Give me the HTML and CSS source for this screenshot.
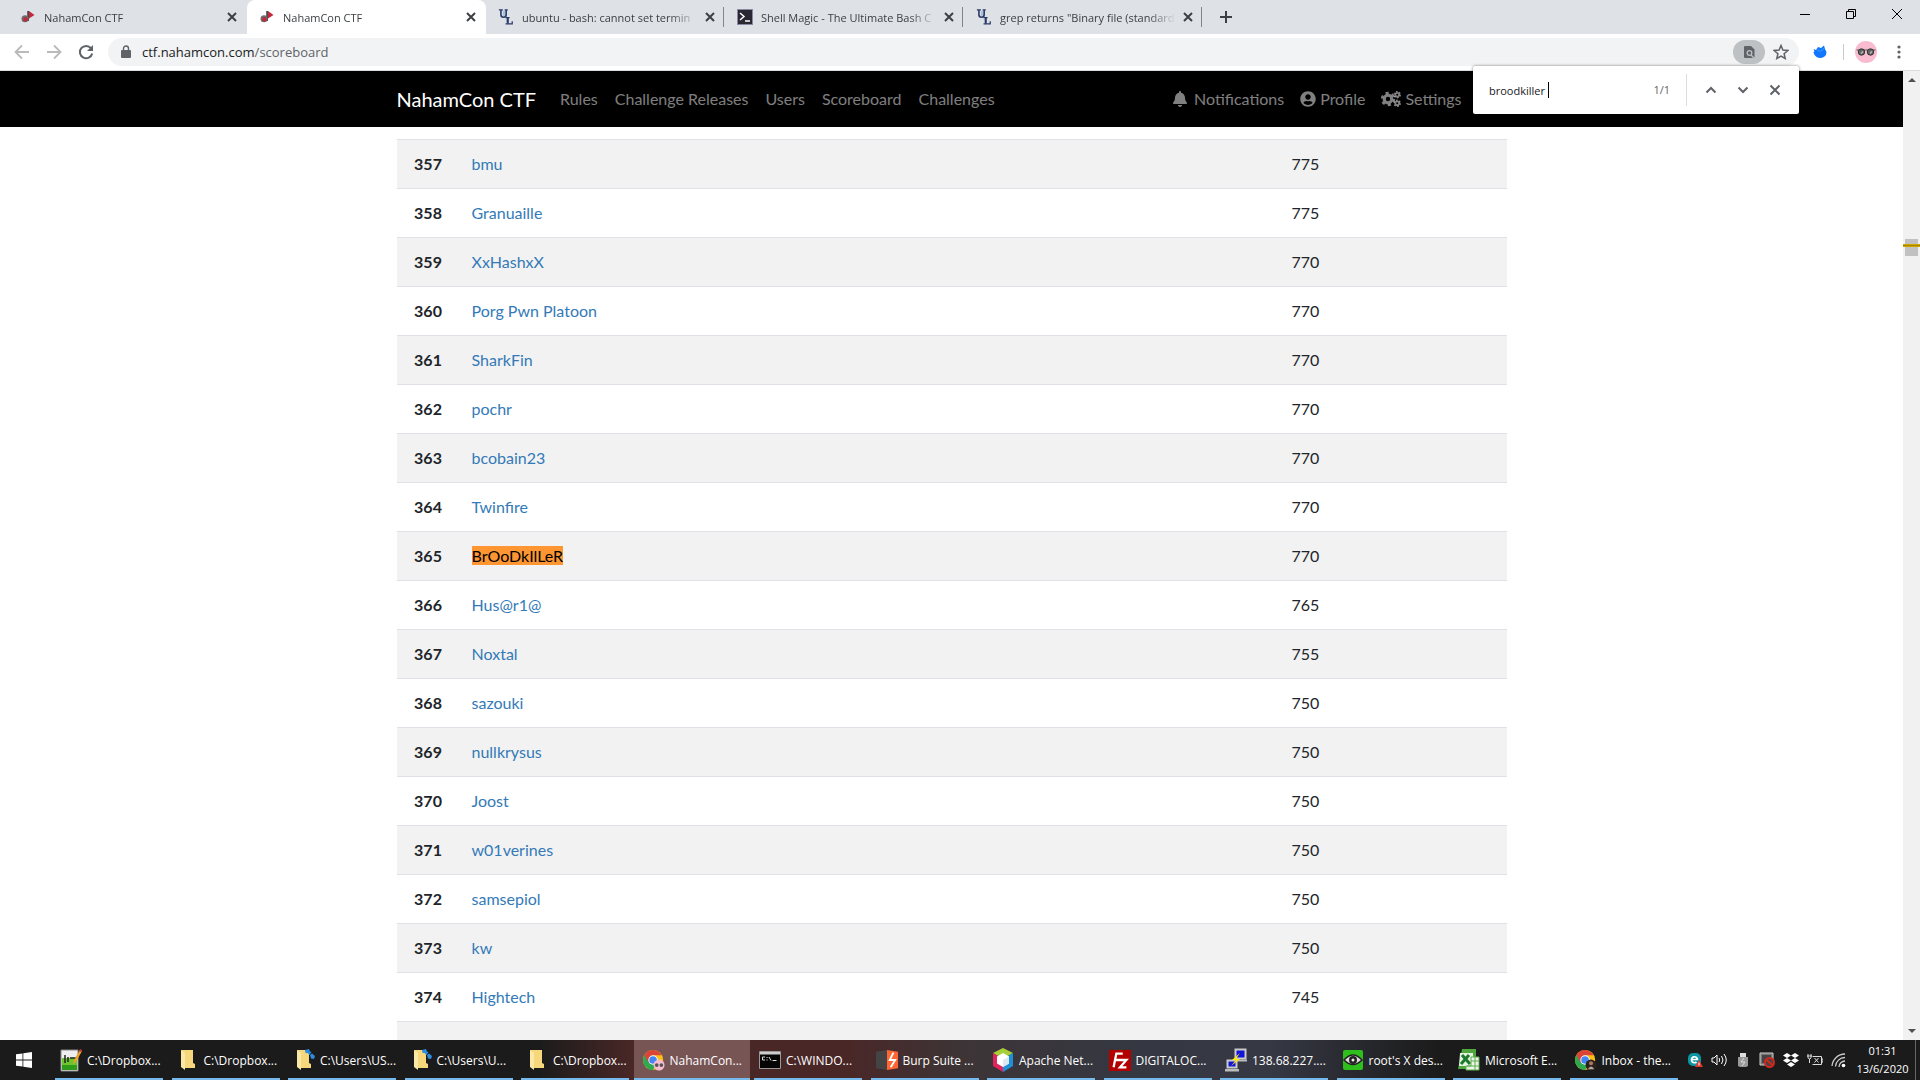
FILE: index.html
```html
<!DOCTYPE html>
<html lang="en">
<head>
<meta charset="utf-8">
<title>NahamCon CTF</title>
<link rel="stylesheet" href="styles.css">
</head>
<body>
<svg class="defs" aria-hidden="true">
  <defs>
    <symbol id="i-close" viewBox="0 0 16 16"><path d="M4 4l8 8M12 4l-8 8" fill="none" stroke="currentColor" stroke-width="2"/></symbol>
    <symbol id="i-flag" viewBox="0 0 16 16"><path d="M9 2l5.500 4-5.500 3.500z" fill="#c3283a"/><path d="M7.200 2h1.800v10H7.200z" fill="#4a4a4e"/><circle cx="5" cy="9.800" r="3.500" fill="#6c6c70"/><circle cx="5.500" cy="10.300" r="2.200" fill="#c3283a"/></symbol>
    <symbol id="i-ul" viewBox="0 0 16 18"><path d="M6 2v6M9 11l1 4" fill="none" stroke="#a9c3df" stroke-width="3"/><path d="M0 1h4.500M6.500 1H10M0 1" fill="none" stroke="#2a3a66" stroke-width="1.400"/><path d="M2.300 1v5.500q0 2.800 2.900 2.800Q8.200 9.300 8.200 6.500V1" fill="none" stroke="#2a3a66" stroke-width="1.800"/><path d="M7.500 9.800h4.500M7.500 16.800h7.500v-3" fill="none" stroke="#2a3a66" stroke-width="1.400"/><path d="M10 9.500v7" stroke="#2a3a66" stroke-width="2.200"/></symbol>
    <symbol id="i-shell" viewBox="0 0 16 16"><path d="M0 0h16v16H0z" fill="#8a88a4"/><path d="M1 1h14v14H1z" fill="#2a2933"/><path d="M3 4l4 3.500L3 11M8 12h5" fill="none" stroke="#fff" stroke-width="1.500"/></symbol>
    <symbol id="i-folder" viewBox="0 0 22 22"><path d="M6 1h9v14h2v4H6z" fill="#e9bd55"/><path d="M4 1h12v13l2 1v4H8z" fill="#f6d77b"/><path d="M4 1l4 3v17l-4-3z" fill="#fbe7a6"/></symbol>
    <symbol id="i-chrome" viewBox="0 0 24 24"><circle cx="11" cy="12" r="11" fill="#fbc116"/><path d="M11 12L1.500 6.500A11 11 0 0 0 11 23l5-8z" fill="#2da94f"/><path d="M1.500 6.500A11 11 0 0 1 20.500 6.800H11L6 15z" fill="#db4437"/><circle cx="11" cy="12" r="5.200" fill="#fff"/><circle cx="11" cy="12" r="4.200" fill="#4285f4"/></symbol>
  </defs>
</svg>

<header class="browser">
  <div class="tabstrip">
    <div class="tabs">
      <div class="tab"><svg class="favicon"><use href="#i-flag"/></svg><span class="tab-title">NahamCon CTF</span><button class="tab-close" aria-label="Close tab"><svg><use href="#i-close"/></svg></button></div>
      <div class="tab tab-active"><svg class="favicon"><use href="#i-flag"/></svg><span class="tab-title">NahamCon CTF</span><button class="tab-close" aria-label="Close tab"><svg><use href="#i-close"/></svg></button></div>
      <div class="tab tab-line"><svg class="favicon"><use href="#i-ul"/></svg><span class="tab-title">ubuntu - bash: cannot set termin</span><button class="tab-close" aria-label="Close tab"><svg><use href="#i-close"/></svg></button></div>
      <div class="tab tab-line"><svg class="favicon"><use href="#i-shell"/></svg><span class="tab-title">Shell Magic - The Ultimate Bash C</span><button class="tab-close" aria-label="Close tab"><svg><use href="#i-close"/></svg></button></div>
      <div class="tab tab-line"><svg class="favicon"><use href="#i-ul"/></svg><span class="tab-title">grep returns "Binary file (standard</span><button class="tab-close" aria-label="Close tab"><svg><use href="#i-close"/></svg></button></div>
      <button class="new-tab" aria-label="New tab"><svg viewBox="0 0 14 14"><path d="M7 1v12M1 7h12" stroke="currentColor" stroke-width="2"/></svg></button>
    </div>
    <div class="window-buttons">
      <button aria-label="Minimize"><svg viewBox="0 0 12 12"><path d="M1 6.500h10" stroke="#000"/></svg></button>
      <button aria-label="Restore"><svg viewBox="0 0 12 12"><path d="M1.500 3.500h7v7h-7zM3.500 3.500v-2h7v7h-2" fill="none" stroke="#000"/></svg></button>
      <button aria-label="Close"><svg viewBox="0 0 12 12"><path d="M1 1l10 10M11 1L1 11" stroke="#000"/></svg></button>
    </div>
  </div>
  <div class="toolbar">
    <div class="nav-buttons">
      <button class="dim" aria-label="Back"><svg viewBox="0 0 16 16"><path d="M15 8H2M8 1.500L1.500 8 8 14.500" fill="none" stroke="currentColor" stroke-width="1.800"/></svg></button>
      <button class="dim" aria-label="Forward"><svg viewBox="0 0 16 16"><path d="M1 8h13M8 1.500L14.500 8 8 14.500" fill="none" stroke="currentColor" stroke-width="1.800"/></svg></button>
      <button aria-label="Reload"><svg viewBox="0 0 16 16"><path d="M13 4.200A6.200 6.200 0 1 0 14.200 9.500" fill="none" stroke="currentColor" stroke-width="2"/><path d="M15 1v6H9z" fill="currentColor"/></svg></button>
    </div>
    <div class="omnibox">
      <svg class="lock" viewBox="0 0 10 14"><path d="M1 5h8a1 1 0 0 1 1 1v6a1 1 0 0 1-1 1H1a1 1 0 0 1-1-1V6a1 1 0 0 1 1-1z" fill="#5f6368"/><path d="M2.500 6V3.500a2.500 2.500 0 0 1 5 0V6" fill="none" stroke="#5f6368" stroke-width="1.400"/></svg>
      <span class="url">ctf.nahamcon.com<span class="path">/scoreboard</span></span>
      <button class="find-chip" aria-label="Find in page"><svg viewBox="0 0 16 16"><path d="M4 2h6l3.500 3.500V13a1 1 0 0 1-1 1H4a1 1 0 0 1-1-1V3a1 1 0 0 1 1-1z" fill="#5f6368"/><circle cx="8.500" cy="9" r="2.300" fill="none" stroke="#bdc1c3" stroke-width="1.300"/><path d="M10 11l3 3" stroke="#bdc1c3" stroke-width="1.300"/></svg></button>
      <button class="star" aria-label="Bookmark"><svg viewBox="0 0 16 16"><path d="M8 1.500l1.900 4.600 4.900.4-3.700 3.200 1.100 4.800L8 12l-4.200 2.500 1.100-4.800L1.200 6.500l4.900-.4z" fill="none" stroke="#5f6368" stroke-width="1.500"/></svg></button>
    </div>
    <button class="extension" aria-label="Extension"><svg viewBox="0 0 16 16"><path d="M1.500 5l2.500 1 2-3 3 1 3-2.500 1 3.500 1.500 3q0 3-2 4.500-2.500 1.700-5 1.500-3-.2-4.500-2.500L2 10l-.5-2 1-.5z" fill="#1177ff"/><path d="M5 6q4 3 7-2" fill="none" stroke="#3f9bff"/></svg></button>
    <span class="toolbar-line"></span>
    <button class="avatar" aria-label="Profile"><svg viewBox="0 0 22 22"><circle cx="11" cy="11" r="11" fill="#f8bbd0"/><path d="M1.500 9h19" stroke="#555" stroke-width="1"/><circle cx="6.500" cy="11" r="3.200" fill="#666" stroke="#333"/><circle cx="15.500" cy="11" r="3.200" fill="#666" stroke="#333"/><path d="M6 12.500l2-2M15 12.500l2-2" stroke="#bbb" stroke-width="1.300"/></svg></button>
    <button class="menu" aria-label="Menu"><svg viewBox="0 0 4 16"><circle cx="2" cy="3" r="1.600"/><circle cx="2" cy="8" r="1.600"/><circle cx="2" cy="13" r="1.600"/></svg></button>
    <form class="findbar">
      <input type="text" class="find-input" aria-label="Find" value="broodkiller"><span class="caret"></span>
      <span class="find-count">1/1</span>
      <button type="button" aria-label="Previous"><svg viewBox="0 0 16 16"><path d="M3.500 10.500L8 6l4.500 4.500" fill="none" stroke="currentColor" stroke-width="2"/></svg></button>
      <button type="button" aria-label="Next"><svg viewBox="0 0 16 16"><path d="M3.500 5.500L8 10l4.500-4.500" fill="none" stroke="currentColor" stroke-width="2"/></svg></button>
      <button type="button" aria-label="Close find bar"><svg viewBox="0 0 16 16"><path d="M3.500 3.500l9 9M12.500 3.500l-9 9" fill="none" stroke="currentColor" stroke-width="2"/></svg></button>
    </form>
  </div>
</header>

<div class="viewport">
  <div class="page">
    <nav class="navbar">
      <div class="container nav-row">
        <a class="brand" href="#">NahamCon CTF</a>
        <a class="nav-link" href="#">Rules</a>
        <a class="nav-link" href="#">Challenge Releases</a>
        <a class="nav-link" href="#">Users</a>
        <a class="nav-link" href="#">Scoreboard</a>
        <a class="nav-link" href="#">Challenges</a>
        <div class="nav-right">
          <a class="nav-link" href="#"><svg class="fa fa-bell" viewBox="0 0 448 512"><path d="M224 512c35.320 0 63.970-28.650 63.970-64H160.030c0 35.350 28.650 64 63.970 64zm215.390-149.710c-19.320-20.760-55.470-51.990-55.470-154.290 0-77.700-54.480-139.900-127.940-155.160V32c0-17.670-14.320-32-31.980-32s-31.980 14.330-31.980 32v20.840C118.560 68.100 64.080 130.300 64.080 208c0 102.300-36.150 133.530-55.470 154.290-6 6.450-8.660 14.160-8.610 21.710.11 16.400 12.980 32 32.100 32h383.800c19.120 0 32-15.600 32.100-32 .05-7.550-2.610-15.270-8.610-21.710z"/></svg>Notifications</a>
          <a class="nav-link" href="#"><svg class="fa fa-user" viewBox="0 0 496 512"><path d="M248 8C111 8 0 119 0 256s111 248 248 248 248-111 248-248S385 8 248 8zm0 96c48.600 0 88 39.400 88 88s-39.400 88-88 88-88-39.400-88-88 39.400-88 88-88zm0 344c-58.700 0-111.300-26.600-146.500-68.200 18.800-35.400 55.600-59.800 98.500-59.800 2.400 0 4.800.4 7.100 1.100 13 4.200 26.600 6.900 40.900 6.900s28-2.700 40.900-6.900c2.300-.7 4.700-1.100 7.100-1.100 42.900 0 79.700 24.400 98.500 59.800C359.300 421.400 306.700 448 248 448z"/></svg>Profile</a>
          <a class="nav-link" href="#"><svg class="fa fa-cogs" viewBox="0 0 20 16"><circle cx="7" cy="8" r="3.800" fill="none" stroke="currentColor" stroke-width="3.200"/><circle cx="7" cy="8" r="6.200" fill="none" stroke="currentColor" stroke-width="2" stroke-dasharray="3.200 3.290"/><circle cx="16.200" cy="3.700" r="1.900" fill="none" stroke="currentColor" stroke-width="1.800"/><circle cx="16.200" cy="3.700" r="3.200" fill="none" stroke="currentColor" stroke-width="1.200" stroke-dasharray="1.700 1.650"/><circle cx="16.200" cy="12.300" r="1.900" fill="none" stroke="currentColor" stroke-width="1.800"/><circle cx="16.200" cy="12.300" r="3.200" fill="none" stroke="currentColor" stroke-width="1.200" stroke-dasharray="1.700 1.650"/></svg>Settings</a>
        </div>
      </div>
    </nav>
    <main class="container scoreboard">
      <table class="table">
        <colgroup><col class="col-place"><col><col class="col-score"></colgroup>
        <tbody>
          <tr><th scope="row">357</th><td><a href="#">bmu</a></td><td>775</td></tr>
          <tr><th scope="row">358</th><td><a href="#">Granuaille</a></td><td>775</td></tr>
          <tr><th scope="row">359</th><td><a href="#">XxHashxX</a></td><td>770</td></tr>
          <tr><th scope="row">360</th><td><a href="#">Porg Pwn Platoon</a></td><td>770</td></tr>
          <tr><th scope="row">361</th><td><a href="#">SharkFin</a></td><td>770</td></tr>
          <tr><th scope="row">362</th><td><a href="#">pochr</a></td><td>770</td></tr>
          <tr><th scope="row">363</th><td><a href="#">bcobain23</a></td><td>770</td></tr>
          <tr><th scope="row">364</th><td><a href="#">Twinfire</a></td><td>770</td></tr>
          <tr><th scope="row">365</th><td><a href="#"><mark>BrOoDkIlLeR</mark></a></td><td>770</td></tr>
          <tr><th scope="row">366</th><td><a href="#">Hus@r1@</a></td><td>765</td></tr>
          <tr><th scope="row">367</th><td><a href="#">Noxtal</a></td><td>755</td></tr>
          <tr><th scope="row">368</th><td><a href="#">sazouki</a></td><td>750</td></tr>
          <tr><th scope="row">369</th><td><a href="#">nullkrysus</a></td><td>750</td></tr>
          <tr><th scope="row">370</th><td><a href="#">Joost</a></td><td>750</td></tr>
          <tr><th scope="row">371</th><td><a href="#">w01verines</a></td><td>750</td></tr>
          <tr><th scope="row">372</th><td><a href="#">samsepiol</a></td><td>750</td></tr>
          <tr><th scope="row">373</th><td><a href="#">kw</a></td><td>750</td></tr>
          <tr><th scope="row">374</th><td><a href="#">Hightech</a></td><td>745</td></tr>
          <tr><th scope="row"></th><td></td><td></td></tr>
        </tbody>
      </table>
    </main>
  </div>
  <div class="scrollbar">
    <svg viewBox="0 0 8 4"><path d="M0 4l4-4 4 4z"/></svg>
    <div class="thumb"></div>
    <svg viewBox="0 0 8 4"><path d="M0 0l4 4 4-4z"/></svg>
  </div>
</div>

<footer class="taskbar">
  <button class="start" aria-label="Start"><svg viewBox="0 0 16 16"><path d="M0 2.300L6.500 1.400v6.200H0zM7.300 1.300L16 0v7.600H7.300zM0 8.400h6.500v6.200L0 13.700zM7.300 8.400H16V16l-8.700-1.300z" fill="#fff"/></svg></button>
  <div class="tasks">
    <button class="task"><svg viewBox="0 0 22 24"><path d="M1 2h17v21H1z" fill="#eee" stroke="#888"/><path d="M2 10h15v12H2z" fill="#6cc52c"/><path d="M2 17h15v5H2z" fill="#2e9b1a"/><path d="M5 7v8M8 9v5M10 10h6" stroke="#222" stroke-width="1.500"/><path d="M13 16l1-4 6-10 2 1-6 11z" fill="#e7a12a"/><path d="M19 3l1-2 2 1-1 2z" fill="#c33"/></svg><span>C:\Dropbox...</span></button>
    <button class="task"><svg viewBox="0 0 22 22"><use href="#i-folder"/></svg><span>C:\Dropbox...</span></button>
    <button class="task"><svg viewBox="0 0 22 22"><use href="#i-folder"/><path d="M12 1l4-1 1 2.500 1.500.5-2 3-2-2-2 0zM17 6l2-1.500 3 2.500-1 3-3-.5z" fill="#2d8ce0"/></svg><span>C:\Users\US...</span></button>
    <button class="task"><svg viewBox="0 0 22 22"><use href="#i-folder"/><path d="M12 1l4-1 1 2.500 1.500.5-2 3-2-2-2 0zM17 6l2-1.500 3 2.500-1 3-3-.5z" fill="#2d8ce0"/></svg><span>C:\Users\U...</span></button>
    <button class="task"><svg viewBox="0 0 22 22"><use href="#i-folder"/></svg><span>C:\Dropbox...</span></button>
    <button class="task task-active"><svg viewBox="0 0 24 24"><use href="#i-chrome"/><circle cx="17.500" cy="17.500" r="6" fill="#f8bbd0"/><circle cx="15" cy="17.500" r="2" fill="#555"/><circle cx="20" cy="17.500" r="2" fill="#555"/></svg><span>NahamCon...</span></button>
    <button class="task"><svg viewBox="0 0 22 22"><path d="M.5 2.500h21v17H.5z" fill="#050505" stroke="#999"/><path d="M1 3h20v2.500H1z" fill="#ccc"/><path d="M6 8H3.500v3H6M8 8v1M8 10.500v1M10 8l2 3.500M13.500 11.500h4" fill="none" stroke="#ddd"/></svg><span>C:\WINDO...</span></button>
    <button class="task"><svg viewBox="0 0 24 24"><path d="M0 3l12-2v22L0 21z" fill="#444"/><path d="M12 1l12 2v18l-12 2z" fill="#ff6633"/><path d="M19 4l-4 8h6l-5 8" fill="none" stroke="#fff" stroke-width="2"/></svg><span>Burp Suite ...</span></button>
    <button class="task"><svg viewBox="0 0 22 24"><path d="M11 0l10 5-10 6L1 5z" fill="#a8cf38"/><path d="M1 5l10 6v13L1 18z" fill="#e0245e"/><path d="M21 5l-10 6v13l10-6z" fill="#1f8fd6"/><path d="M11 5l6 3.500v7L11 19l-6-3.500v-7z" fill="#fff"/><path d="M11 12l6-3.500v7L11 19z" fill="#dbe9ef"/></svg><span>Apache Net...</span></button>
    <button class="task"><svg viewBox="0 0 24 24"><path d="M0 1h24v23H0z" fill="#b30000"/><path d="M5 20L8 5h7M6.500 12h6M12 12h7l-7 8h7" fill="none" stroke="#fff" stroke-width="2.500"/></svg><span>DIGITALOC...</span></button>
    <button class="task"><svg viewBox="0 0 22 24"><path d="M10.500 1.500h10v9h-10zM2.500 12.500h9v7h-9z" fill="#1414d8" stroke="#ccc" stroke-width="2"/><path d="M9 11.500h13v2H11zM0 21h14v2.500H0z" fill="#bbb"/><path d="M15 5l-8 7 4 0-5 6 9-7-4 0z" fill="#ffec00"/></svg><span>138.68.227....</span></button>
    <button class="task"><svg viewBox="0 0 22 22"><rect x="1" y="1" width="20" height="20" rx="2" fill="#2fbf1d"/><path d="M2 11q9-10 18 0-9 9-18 0z" fill="#ddd" stroke="#222" stroke-width="1.500"/><circle cx="11" cy="11" r="4" fill="#222"/><circle cx="11" cy="11" r="1.500" fill="#eee"/></svg><span>root's X des...</span></button>
    <button class="task"><svg viewBox="0 0 22 22"><path d="M4 0h14v20H0z" fill="#4fa83d"/><path d="M2 4h13v13H1z" fill="#e4f2df"/><path d="M4 6l8 9M11 6l-8 9" stroke="#1d7a2d" stroke-width="3"/><path d="M13 8h8v13H8v-4h5z" fill="#e9f5e5" stroke="#5fae4e"/><path d="M13 12h8M9 17h12M17 8v13" stroke="#5fae4e"/></svg><span>Microsoft E...</span></button>
    <button class="task"><svg viewBox="0 0 24 24"><use href="#i-chrome"/><circle cx="17.500" cy="17.500" r="6" fill="#2b211d"/><circle cx="17.500" cy="15.500" r="2.200" fill="#a9795c"/><path d="M14 22q3.500-6 7 0z" fill="#b9a9a0"/></svg><span>Inbox - the...</span></button>
  </div>
  <div class="tray">
    <svg viewBox="0 0 16 16"><rect x="1" y="1" width="13" height="13" rx="5" fill="#0a96a4"/><path d="M4.500 7.500h6a3 3 0 1 0-1 2.500" fill="none" stroke="#fff" stroke-width="1.700"/><path d="M12 8l4 7H8z" fill="#e03a2f"/><path d="M12 10.500v3" stroke="#fff"/></svg>
    <svg viewBox="0 0 16 16"><path d="M1 6h2l3-3v10l-3-3H1zM8 6q1.500 2 0 4M10.500 4q3 4 0 8M13 2q4.500 6 0 12" fill="none" stroke="#fff"/></svg>
    <svg viewBox="0 0 16 16"><path d="M5 1h6v4H5z" fill="#ddd"/><path d="M3 5h10v9l-2 1H5l-2-1z" fill="#999"/><path d="M9 6l-3 4h4l-3 4" fill="none" stroke="#ddd"/></svg>
    <svg viewBox="0 0 16 16"><path d="M1 1h13v12H1z" fill="#777" stroke="#ccc"/><path d="M3 3h9v8H3z" fill="#444"/><circle cx="10.500" cy="10.500" r="4.500" fill="#444" stroke="#d3261d" stroke-width="2"/><path d="M7.500 8l6 5" stroke="#d3261d" stroke-width="2"/></svg>
    <svg viewBox="0 0 16 16"><path d="M4 1l4 2.500L4 6 0 3.500zM12 1l4 2.500L12 6 8 3.500zM4 6l4 2.500L4 11 0 8.500zM12 6l4 2.500-4 2.500-4-2.500zM8 10l4 2.500L8 15l-4-2.500z" fill="#fff"/></svg>
    <svg viewBox="0 0 16 16"><path d="M5.500 4.500h9v8h-9M14.500 7H16v3h-1.500M0 4h5M1 2v4q2 2 3 0V2M2.500 7v4M7.500 6l4 4.500M11.500 6l-4 4.500" fill="none" stroke="#ddd"/></svg>
    <svg viewBox="0 0 16 16"><path d="M1 14A13 13 0 0 1 14 2M4.500 14.500A9.500 9.500 0 0 1 14 5.500M8 15a6 6 0 0 1 6-6" fill="none" stroke="#ccc" stroke-width="1.300"/><circle cx="12.500" cy="13.500" r="1.800" fill="#fff"/></svg>
  </div>
  <div class="clock"><span>01:31</span><span>13/6/2020</span></div>
</footer>
</body>
</html>
```
FILE: styles.css
```css
* { box-sizing: border-box; }

body {
  margin: 0;
  height: 100vh;
  display: flex;
  flex-direction: column;
  overflow: hidden;
  font-family: "Open Sans", "Noto Sans", sans-serif;
  font-size: 12px;
}

button {
  border: 0;
  padding: 0;
  background: none;
  font: inherit;
  color: inherit;
  display: flex;
  align-items: center;
  justify-content: center;
}

a { text-decoration: none; }
svg { flex: none; }
.defs { position: absolute; width: 0; height: 0; }

/* Browser window */
.browser { flex: none; color: #3c4043; font-size: 11px; }

.tabstrip {
  display: flex;
  justify-content: space-between;
  height: 34px;
  background: #dee1e6;
}

.tabs { display: flex; padding-left: 8px; }

.tab {
  display: flex;
  align-items: center;
  width: 239px;
  padding: 0 6px 0 12px;
  border-right: 1px solid transparent;
}

.tab-active { background: #fff; border-radius: 8px 8px 0 0; }

.tab-line {
  background: linear-gradient(#80868b, #80868b) right center / 1px 20px no-repeat;
}

.favicon { width: 16px; height: 16px; margin-right: 8px; }

.tab-title {
  flex: 1;
  overflow: hidden;
  white-space: nowrap;
  -webkit-mask-image: linear-gradient(90deg, #000 84%, transparent);
  mask-image: linear-gradient(90deg, #000 84%, transparent);
}

.tab-close { width: 16px; height: 16px; margin-left: 4px; }
.tab-close svg { width: 16px; height: 16px; }
.new-tab { width: 46px; }
.new-tab svg { width: 14px; height: 14px; }

.window-buttons { display: flex; height: 28px; }
.window-buttons button { width: 46px; }
.window-buttons svg { width: 12px; height: 12px; }

.toolbar {
  position: relative;
  display: flex;
  align-items: center;
  height: 37px;
  padding-right: 13px;
  border-bottom: 1px solid #dadce0;
  background: #fff;
  color: #5f6368;
}

.nav-buttons { display: flex; padding: 0 6px; }
.nav-buttons button { width: 32px; }
.nav-buttons svg { width: 16px; height: 16px; }
.nav-buttons .dim { color: #bababc; }

.omnibox {
  flex: 1;
  display: flex;
  align-items: center;
  height: 28px;
  padding: 0 10px 0 13px;
  border-radius: 14px;
  background: #f1f3f4;
}

.lock { width: 10px; height: 14px; margin-right: 11px; }
.url { flex: 1; font-size: 13px; color: #202124; }
.path { color: #5f6368; }

.find-chip { width: 32px; height: 24px; border-radius: 12px; background: #bdc1c3; }
.find-chip svg, .star svg { width: 16px; height: 16px; }
.star { margin-left: 8px; }
.extension { margin-left: 13px; }
.extension svg { width: 16px; height: 16px; }
.toolbar-line { width: 1px; height: 16px; margin: 0 11px 0 15px; background: #c8cacd; }
.avatar svg { width: 22px; height: 22px; }
.menu { width: 16px; margin-left: 14px; }
.menu svg { width: 4px; height: 16px; fill: #5f6368; }

.findbar {
  position: absolute;
  z-index: 2;
  top: 32px;
  right: 121px;
  display: flex;
  align-items: center;
  width: 326px;
  height: 48px;
  padding: 0 8px 0 16px;
  border-radius: 2px;
  background: #fff;
  box-shadow: 0 0 3px rgba(0, 0, 0, .5);
}

.find-input {
  width: 59px;
  padding: 0;
  border: 0;
  outline: 0;
  font: inherit;
  color: #202124;
}

.caret { width: 1px; height: 16px; background: #000; }

.find-count {
  flex: 1;
  margin-right: 8px;
  padding-right: 16px;
  border-right: 1px solid #dadce0;
  line-height: 32px;
  text-align: right;
}

.findbar button { width: 32px; height: 32px; }
.findbar svg { width: 16px; height: 16px; }

/* Page */
.viewport { flex: 1; display: flex; min-height: 0; }

.page {
  flex: 1;
  overflow: hidden;
  background: #fff;
  font: 16px/24px Lato, sans-serif;
  color: #212529;
}

.container { width: 100%; max-width: 1140px; margin: 0 auto; padding: 0 15px; }
.navbar { padding: 8px 0; background: #000; }
.nav-row { display: flex; align-items: center; gap: 1px; }
.brand { margin-right: 15px; font-size: 20px; line-height: 30px; color: #fff; }
.nav-link { display: flex; align-items: center; padding: 8px; color: rgba(255, 255, 255, .5); }
.nav-right { display: flex; margin-left: auto; padding-right: 37px; }
.fa { height: 16px; margin-right: 4px; fill: currentColor; }
.fa-bell { width: 14px; margin-right: 7px; }
.fa-user { width: 16px; }
.fa-cogs { width: 20px; }

.scoreboard { padding-top: 12px; }
.table { width: 100%; table-layout: fixed; border-collapse: collapse; }
.col-place { width: 63px; }
.col-score { width: 227px; }
.table th, .table td { height: 49px; padding: 12px; border-top: 1px solid #dee2e6; text-align: left; }
.table th { text-align: center; }
.table tr:nth-child(odd) { background: #f2f2f2; }
.table a { color: #337ab7; }
.table mark { background: #ff9632; color: #000; }

.scrollbar {
  flex: none;
  display: flex;
  flex-direction: column;
  align-items: center;
  justify-content: space-between;
  width: 17px;
  padding: 7px 0;
  background: #f1f1f1;
}

.scrollbar svg { width: 8px; height: 4px; fill: #505050; }

.thumb {
  width: 17px;
  height: 17px;
  margin: 157px 0 auto;
  background:
    linear-gradient(#e6b800, #a88600 50%, #e6b800) 0 5px / 17px 3px no-repeat,
    linear-gradient(#c1c1c1, #c1c1c1) center / 13px 17px no-repeat;
}

/* Taskbar */
.taskbar {
  flex: none;
  display: flex;
  height: 40px;
  background: linear-gradient(90deg, #1b1b1b 28%, #4a2727 33%, #4a2727 44%, #3d3436 50%, #353741 58%, #363844 66%, #1b1b1b 75%);
  color: #fff;
}

.start { width: 48px; }
.start svg { width: 16px; height: 16px; }
.tasks { flex: 1; display: flex; min-width: 0; padding-left: 3px; }

.task {
  flex: 1;
  min-width: 0;
  max-width: 117px;
  justify-content: flex-start;
  gap: 5px;
  padding: 0 0 0 9px;
  background: linear-gradient(#76b9ed, #76b9ed) center bottom / 108px 2px no-repeat;
  white-space: nowrap;
}

.task svg { width: 22px; height: 24px; }
.task-active { background: linear-gradient(#76b9ed, #76b9ed) center bottom / 100% 2px no-repeat #775555; }

.tray { display: flex; align-items: center; gap: 8px; padding: 0 3px 0 5px; }
.tray svg { width: 16px; height: 16px; }

.clock {
  display: flex;
  flex-direction: column;
  align-items: center;
  justify-content: center;
  width: 66px;
  margin-right: 4px;
  border-right: 1px solid #666;
  font-size: 11px;
  line-height: 18px;
}
```
